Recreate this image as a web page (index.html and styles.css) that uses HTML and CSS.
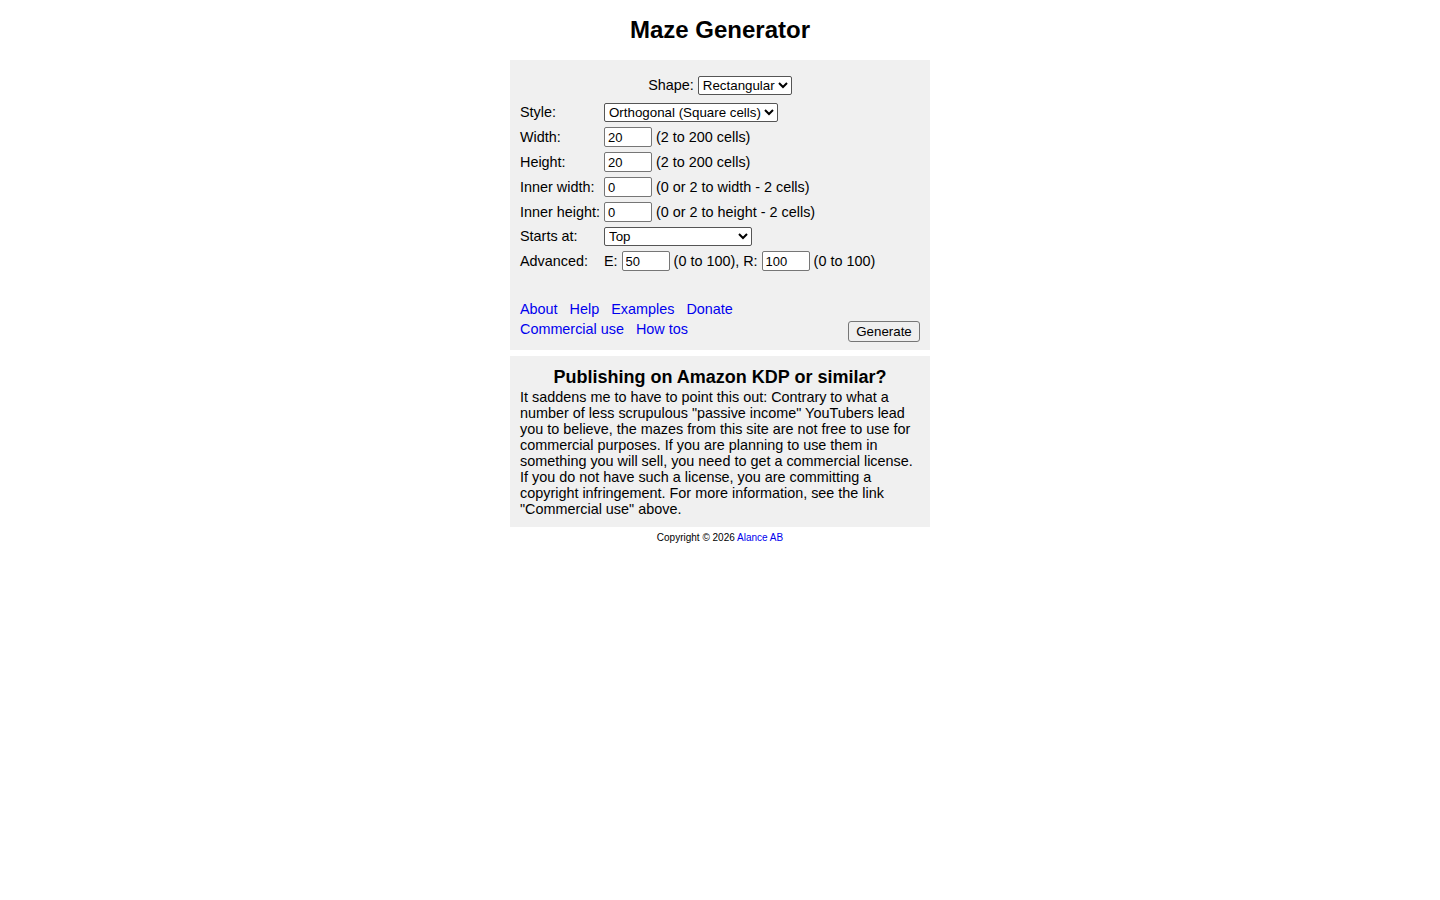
FILE: index.html
```
<!DOCTYPE html>
<html lang="en">
<head>
    <meta charset="utf-8">
    <title>Maze Generator</title>
    <link rel="stylesheet" href="styles.css">
</head>
<body>
    <h1>Maze Generator</h1>

    <div class="panel form-panel">
        <div class="shape-row">
            <label for="shape">Shape:</label>
            <select id="shape" class="sel-shape">
                <option>Rectangular</option>
            </select>
        </div>

        <div class="form-grid">
            <label>Style:</label>
            <div class="field">
                <select class="sel-style"><option>Orthogonal (Square cells)</option></select>
            </div>

            <label>Width:</label>
            <div class="field"><input type="text" class="num" value="20"> (2 to 200 cells)</div>

            <label>Height:</label>
            <div class="field"><input type="text" class="num" value="20"> (2 to 200 cells)</div>

            <label>Inner width:</label>
            <div class="field"><input type="text" class="num" value="0"> (0 or 2 to width - 2 cells)</div>

            <label>Inner height:</label>
            <div class="field"><input type="text" class="num" value="0"> (0 or 2 to height - 2 cells)</div>

            <label>Starts at:</label>
            <div class="field">
                <select class="sel-start"><option>Top</option></select>
            </div>

            <label>Advanced:</label>
            <div class="field">E:&nbsp;<input type="text" class="num" value="50"> (0 to 100), R:&nbsp;<input type="text" class="num" value="100"> (0 to 100)</div>
        </div>

        <div class="bottom-row">
            <div class="links">
                <div><a href="#">About</a><a href="#">Help</a><a href="#">Examples</a><a href="#">Donate</a></div>
                <div><a href="#">Commercial use</a><a href="#">How tos</a></div>
            </div>
            <button class="generate">Generate</button>
        </div>
    </div>

    <div class="panel notice">
        <h2>Publishing on Amazon KDP or similar?</h2>
        <p>It saddens me to have to point this out: Contrary to what a number of less scrupulous "passive income" YouTubers lead you to believe, the mazes from this site are not free to use for commercial purposes. If you are planning to use them in something you will sell, you need to get a commercial license. If you do not have such a license, you are committing a copyright infringement. For more information, see the link "Commercial use" above.</p>
    </div>

    <p class="copyright">Copyright &copy; 2026 <a href="#">Alance AB</a></p>
</body>
</html>
```
FILE: styles.css
```
body {
    font-family: "Liberation Sans", Arial, sans-serif;
    font-size: 14.4px;
    color: #000;
    background: #fff;
    margin: 0;
}
h1 {
    font-size: 24px;
    text-align: center;
    margin: 16px 0 16px;
}
.panel {
    width: 400px;
    margin: 0 auto;
    padding: 10px;
    background: #f0f0f0;
}
.form-panel {
    padding-top: 16px;
    padding-bottom: 8px;
}
.shape-row {
    text-align: center;
    margin-bottom: 8px;
}
select {
    font-family: "Liberation Sans", Arial, sans-serif;
    font-size: 13.33px;
    height: 19px;
    padding: 0;
    border: 1px solid #555;
    border-radius: 2px;
    background: #fff;
    color: #000;
}
.sel-shape {
    width: 94px;
}
.sel-style {
    width: 174px;
}
.sel-start {
    width: 148px;
}
.form-grid {
    display: grid;
    grid-template-columns: 84px auto;
    row-gap: 5px;
    align-items: center;
}
.form-grid label {
    line-height: 19px;
}
.field {
    display: flex;
    align-items: center;
    white-space: pre;
}
input.num {
    font-family: "Liberation Sans", Arial, sans-serif;
    font-size: 13px;
    width: 48px;
    height: 20px;
    box-sizing: border-box;
    padding: 0 3px;
    margin: 0;
    border: 1px solid #767676;
    border-radius: 2px;
    background: #fff;
}
.bottom-row {
    display: flex;
    justify-content: space-between;
    align-items: flex-end;
    margin-top: 28px;
}
.links {
    margin-bottom: 3px;
}
.links div {
    line-height: 20px;
}
.links a {
    color: #00e;
    text-decoration: none;
    margin-right: 12px;
}
.generate {
    font-family: "Liberation Sans", Arial, sans-serif;
    font-size: 13.33px;
    width: 72px;
    height: 21px;
    padding: 0;
    border: 1px solid #767676;
    border-radius: 3px;
    background: #efefef;
    color: #000;
}
.notice {
    margin-top: 6px;
    padding-top: 11px;
    padding-bottom: 10px;
}
.notice h2 {
    font-size: 18px;
    text-align: center;
    margin: 0 0 1px;
}
.notice p {
    margin: 0;
    line-height: 16px;
}
.copyright {
    font-size: 10px;
    text-align: center;
    margin: 5px 0;
}
.copyright a {
    color: #00e;
    text-decoration: none;
}
```
